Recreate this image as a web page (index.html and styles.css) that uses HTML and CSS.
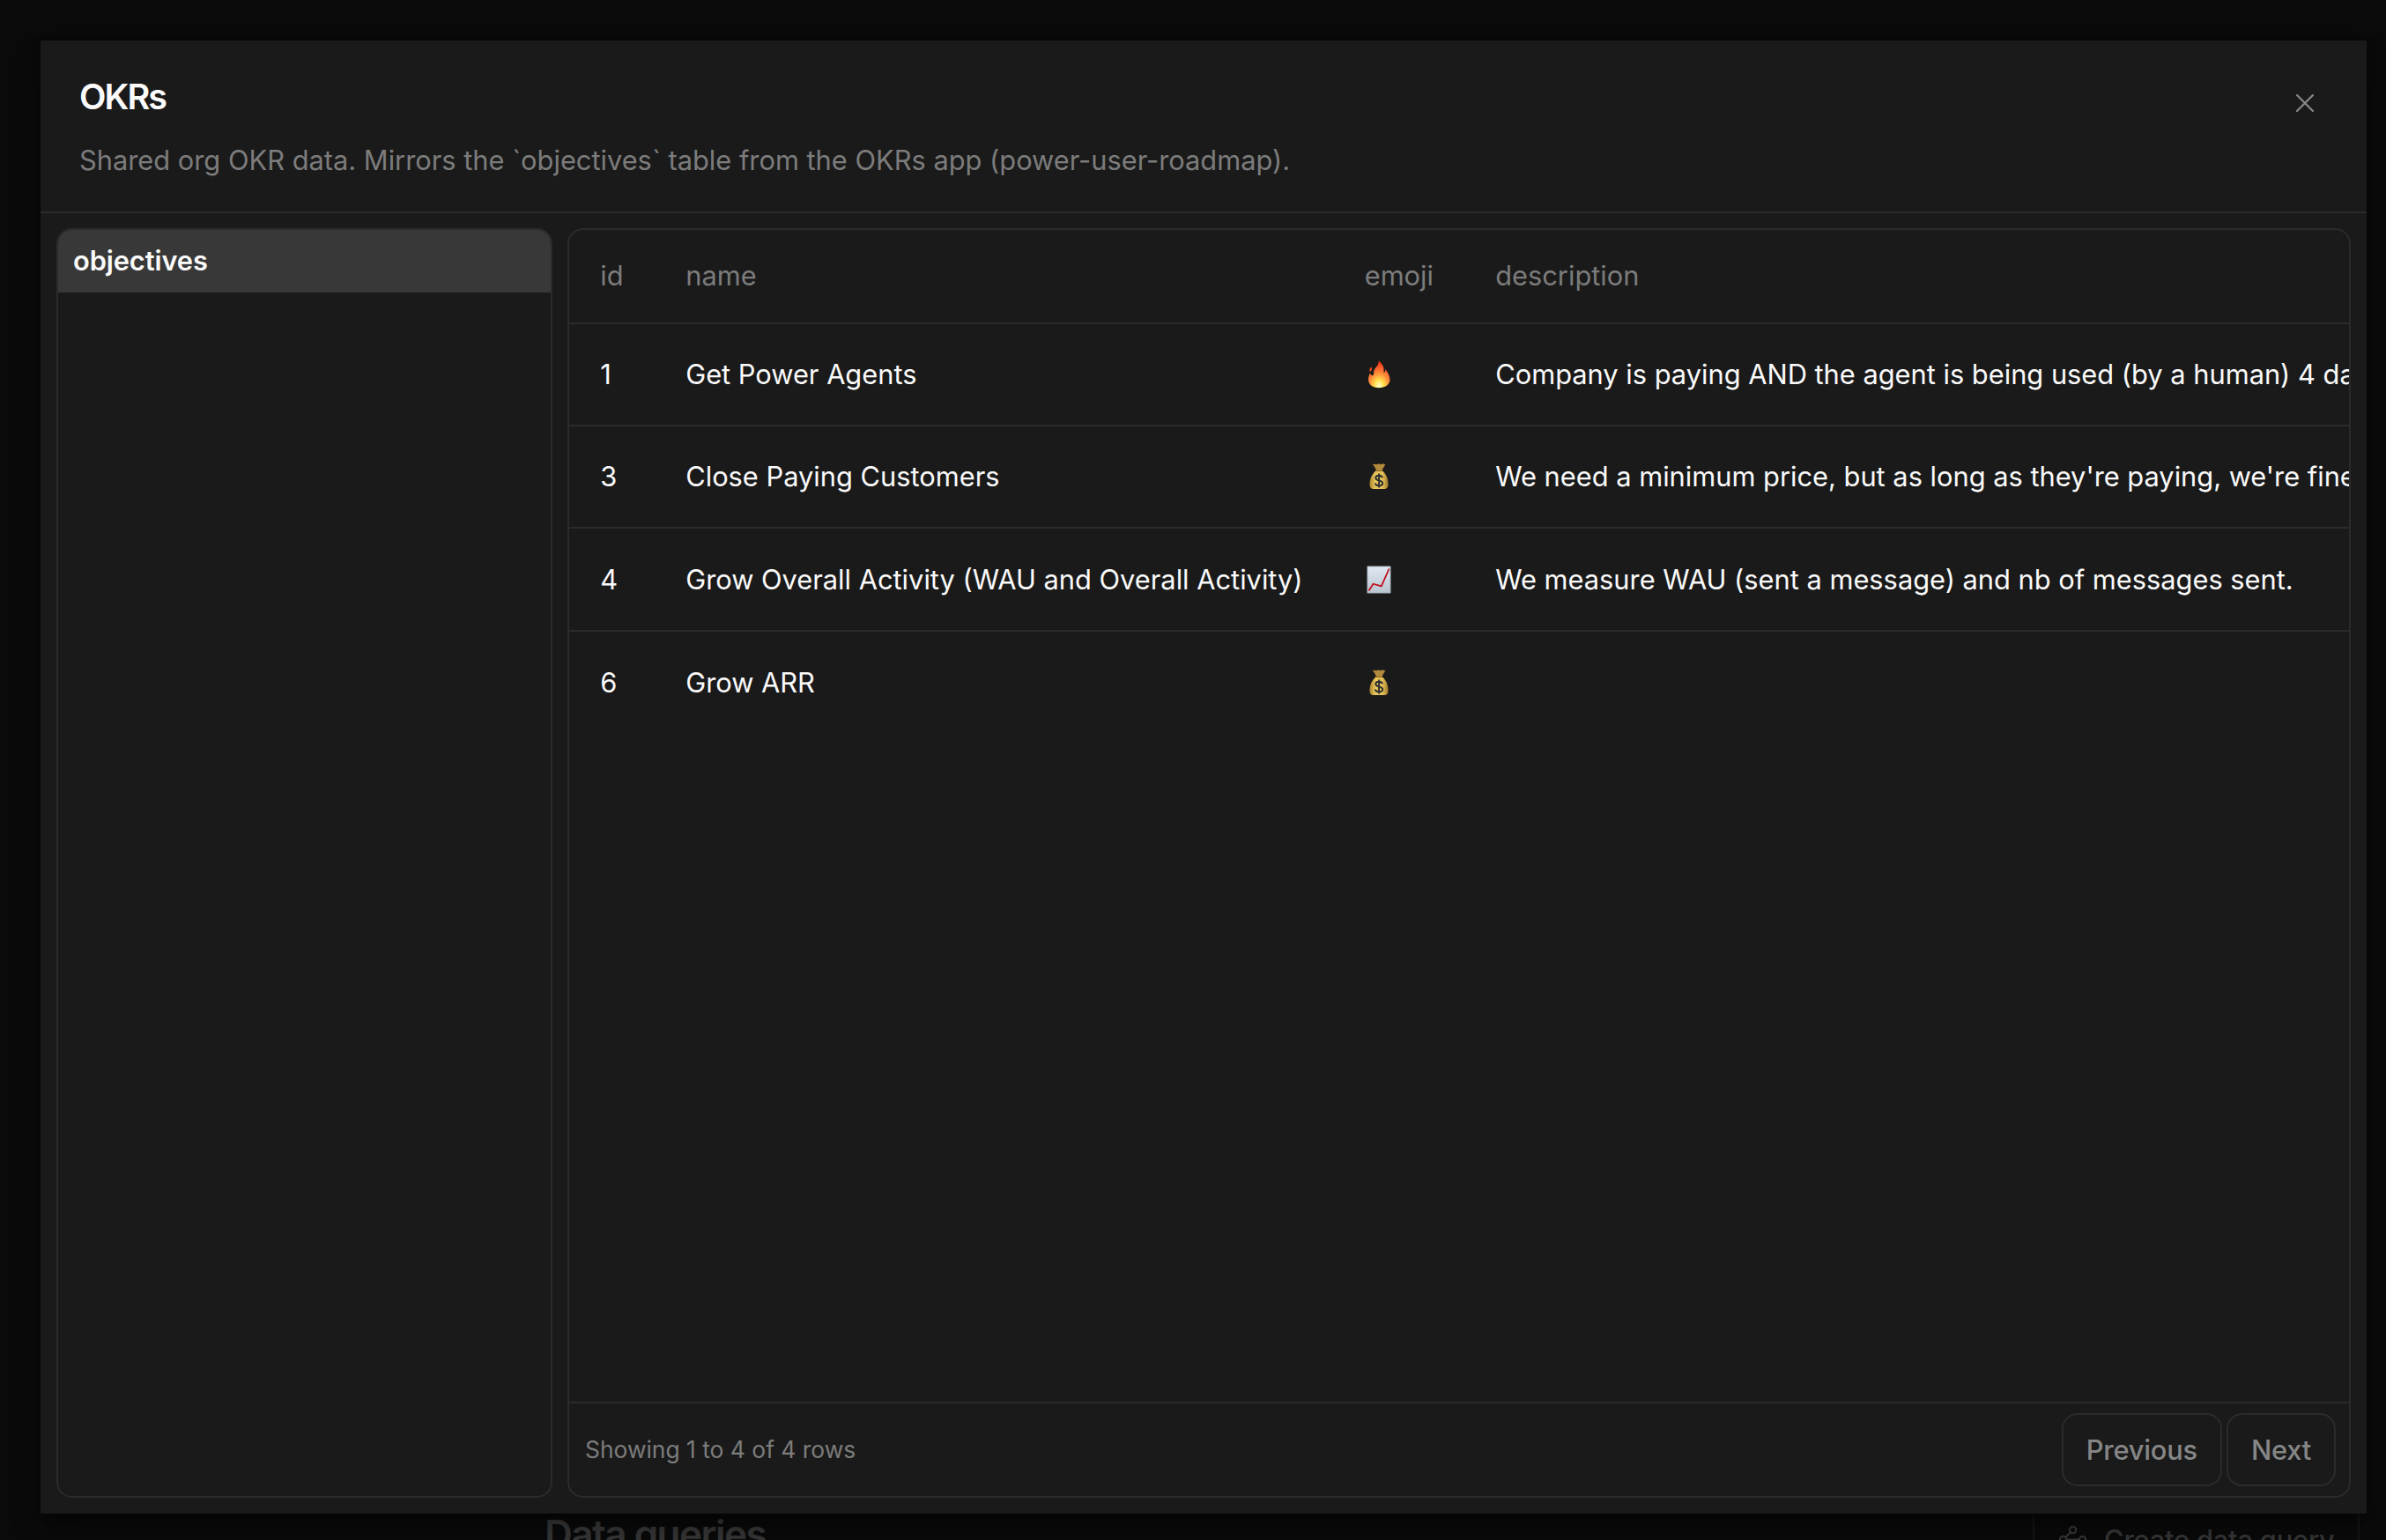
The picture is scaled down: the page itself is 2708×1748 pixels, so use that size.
FILE: index.html
```html
<!DOCTYPE html>
<html lang="en">
<head>
    <meta charset="UTF-8">
    <meta name="viewport" content="width=device-width, initial-scale=1.0">
    <title>OKRs</title>
    <link rel="stylesheet" href="styles.css">
</head>
<body>

    <!-- emoji shapes, reused in the table -->
    <svg class="defs" width="0" height="0">
        <defs>
            <radialGradient id="fireFill" cx="0.5" cy="0.92" r="0.85">
                <stop offset="0" stop-color="#fffbd0"/>
                <stop offset="0.25" stop-color="#ffe04a"/>
                <stop offset="0.55" stop-color="#ff8a3a"/>
                <stop offset="1" stop-color="#f0371a"/>
            </radialGradient>
            <linearGradient id="bagFill" x1="0" x2="1" y1="0" y2="0">
                <stop offset="0" stop-color="#a9842f"/>
                <stop offset="0.3" stop-color="#e8c65a"/>
                <stop offset="0.7" stop-color="#e3bf55"/>
                <stop offset="1" stop-color="#a07a2b"/>
            </linearGradient>
            <linearGradient id="chartFill" x1="0" x2="0" y1="0" y2="1">
                <stop offset="0" stop-color="#dfe9f2"/>
                <stop offset="1" stop-color="#b9c4cf"/>
            </linearGradient>
            <symbol id="fire" viewBox="0 0 32 32">
                <path fill="url(#fireFill)" d="M15.500 0.500C18 2 21.300 5.500 21.600 10C21.700 12 21.300 13.500 21.800 14C23 13.700 23.500 12 23.300 10C26 13.500 28.500 17.500 28.500 22C28.500 27.500 23 31.300 16 31.300C9 31.300 4 27.500 4 21.500C4 18.500 5 16.500 6 14.500C6.500 16 7.400 17.200 8.600 17.300C10 17 10.300 15.500 10.200 13C10 9 16.500 6.500 15.500 0.500Z"/>
                <path fill="#ee4a20" d="M7.600 7.500C8.500 9 8.200 11.500 6 13C4.500 11.500 5.500 9 7.600 7.500Z"/>
            </symbol>
            <symbol id="bag" viewBox="0 0 32 32">
                <path fill="#b18a3c" d="M9 2.300C11 1.100 13 2.900 14.500 1.700C16 0.900 17.500 2.500 19 1.700C21 0.900 22.500 2.100 23.500 2.300C22 4.500 20 7 19.500 10H13C12.500 7 11 4.500 9 2.300Z"/>
                <path fill="url(#bagFill)" d="M13 9H19.500C23.500 12 26.500 17.500 26.500 24.500C26.500 28.500 25 30 22 30H10C7 30 5.500 28.500 5.500 24.500C5.500 17.500 9 12 13 9Z"/>
                <path fill="none" stroke="#8a6526" d="M12.500 9.500H20"/>
                <path fill="none" stroke="#2b2d33" stroke-width="1.900" d="M20 17.200C19.500 15.300 18 14.700 16 14.700C13.800 14.700 12.300 15.700 12.300 17.500C12.300 21.500 20.200 19.300 20.200 23.500C20.200 25.300 18.500 26.300 16.200 26.300C13.800 26.300 12.200 25.400 11.800 23.500M16.100 12.500V28.500"/>
            </symbol>
            <symbol id="chart" viewBox="0 0 32 32">
                <path fill="url(#chartFill)" stroke="#9aa5b0" stroke-width="0.800" d="M2.900 0.900H29.100V31.100H2.900Z"/>
                <path fill="none" stroke="#c0101c" stroke-width="1.800" d="M4.500 28.500L9.500 20.700L18.800 23.300L27.600 3.500"/>
            </symbol>
        </defs>
    </svg>

    <!-- page behind the dialog -->
    <div class="page">
        <h2 class="page-title">Data queries</h2>
        <button class="create-btn">
            <svg class="create-icon" viewBox="0 0 24 24">
                <circle cx="12" cy="4.5" r="2.5"/>
                <path d="M10.200 6.300L6.300 10.200"/>
                <circle cx="4.5" cy="12" r="2.5"/>
                <path d="M7 12H17"/>
                <circle cx="19.5" cy="12" r="2.5"/>
                <path d="M13.800 17.700L17.700 13.800"/>
                <circle cx="12" cy="19.5" r="2.5"/>
            </svg>
            Create data query
        </button>
    </div>

    <div class="dialog">
        <div class="dialog-header">
            <div>
                <h1>OKRs</h1>
                <p>Shared org OKR data. Mirrors the `objectives` table from the OKRs app (power-user-roadmap).</p>
            </div>
            <svg class="close" viewBox="0 0 20 20"><path d="M1 1L19 19M19 1L1 19"/></svg>
        </div>

        <div class="dialog-body">
            <div class="sidebar">
                <div class="sidebar-item">objectives</div>
            </div>

            <div class="panel">
                <div class="table-wrap">
                    <table>
                        <colgroup>
                            <col class="col-id">
                            <col class="col-name">
                            <col class="col-emoji">
                            <col>
                        </colgroup>
                        <thead>
                            <tr><th>id</th><th>name</th><th>emoji</th><th>description</th></tr>
                        </thead>
                        <tbody>
                            <tr>
                                <td>1</td>
                                <td>Get Power Agents</td>
                                <td><svg class="emoji"><use href="#fire"/></svg></td>
                                <td>Company is paying AND the agent is being used (by a human) 4 da</td>
                            </tr>
                            <tr>
                                <td>3</td>
                                <td>Close Paying Customers</td>
                                <td><svg class="emoji"><use href="#bag"/></svg></td>
                                <td>We need a minimum price, but as long as they're paying, we're fine</td>
                            </tr>
                            <tr>
                                <td>4</td>
                                <td>Grow Overall Activity (WAU and Overall Activity)</td>
                                <td><svg class="emoji"><use href="#chart"/></svg></td>
                                <td>We measure WAU (sent a message) and nb of messages sent.</td>
                            </tr>
                            <tr>
                                <td>6</td>
                                <td>Grow ARR</td>
                                <td><svg class="emoji"><use href="#bag"/></svg></td>
                                <td></td>
                            </tr>
                        </tbody>
                    </table>
                </div>

                <div class="panel-footer">
                    <span class="count">Showing 1 to 4 of 4 rows</span>
                    <button class="pager-btn">Previous</button>
                    <button class="pager-btn">Next</button>
                </div>
            </div>
        </div>
    </div>

</body>
</html>
```
FILE: styles.css
```css
* {
    box-sizing: border-box;
}
body {
    margin: 0;
    height: 1748px;
    overflow: hidden;
    position: relative;
    background: #0a0a0a;
    color: #fafafa;
    font-family: Inter, sans-serif;
    font-size: 30.8px;
    line-height: 48px;
}
h1, h2, p {
    margin: 0;
}
button {
    font: inherit;
    background: none;
}
.defs {
    position: absolute;
}

/* page behind */
.page {
    height: 1748px;
    padding: 1704px 30px 0 618px;
    display: flex;
    justify-content: space-between;
    align-items: flex-start;
    overflow: hidden;
}
.page-title {
    color: #383838;
    font-size: 44px;
    font-weight: 600;
    line-height: 74px;
    letter-spacing: -1.5px;
}
.create-btn {
    display: flex;
    align-items: center;
    gap: 17.6px;
    height: 88px;
    padding: 0 26.4px;
    border: 2px solid #161616;
    border-radius: 17.6px;
    color: #383838;
    font-weight: 500;
    letter-spacing: -0.2px;
    white-space: nowrap;
}
.create-icon {
    width: 35.2px;
    height: 35.2px;
    flex: none;
    fill: none;
    stroke: #383838;
    stroke-width: 1.5;
}

/* dialog */
.dialog {
    position: absolute;
    left: 46px;
    top: 46px;
    width: 2640px;
    height: 1672px;
    display: flex;
    flex-direction: column;
    background: #1a1a1a;
    box-shadow: 0 22px 33px -6px rgba(0, 0, 0, 0.4), 0 4px 9px -2px rgba(0, 0, 0, 0.4);
}
.dialog-header {
    height: 196px;
    padding: 40px 60px 0 44px;
    display: flex;
    justify-content: space-between;
    border-bottom: 2px solid #2b2b2b;
}
.dialog-header h1 {
    font-size: 39.6px;
    font-weight: 600;
    letter-spacing: -1.9px;
}
.dialog-header p {
    margin-top: 24px;
    color: #7c7c7c;
}
.close {
    width: 20px;
    height: 20px;
    margin-top: 21px;
    fill: none;
    stroke: #8a8a8a;
    stroke-width: 2.2;
    stroke-linecap: round;
}
.dialog-body {
    flex: 1;
    display: flex;
    gap: 17px;
    padding: 17px 18px 18px;
}
.sidebar, .panel {
    border: 2px solid #2b2b2b;
    border-radius: 17.6px;
    overflow: hidden;
}
.sidebar {
    width: 563px;
}
.sidebar-item {
    height: 71px;
    padding: 0 17px;
    background: #383838;
    font-weight: 600;
    line-height: 70px;
    letter-spacing: -0.1px;
}
.panel {
    flex: 1;
    min-width: 0;
    display: flex;
    flex-direction: column;
}
.table-wrap {
    flex: 1;
    overflow: hidden;
}
table {
    width: 2400px;
    table-layout: fixed;
    border-collapse: separate;
    border-spacing: 0;
}
.col-id {
    width: 97px;
}
.col-name {
    width: 770.5px;
}
.col-emoji {
    width: 148.5px;
}
th, td {
    padding: 0 0 0 35.2px;
    text-align: left;
    white-space: nowrap;
    border-bottom: 2px solid #2b2b2b;
}
th {
    height: 107px;
    padding-bottom: 2px;
    color: #7c7c7c;
    font-weight: 400;
}
td {
    height: 116px;
}
tbody tr:nth-child(3) td {
    height: 117px;
}
tbody tr:last-child td {
    border-bottom: none;
}
.emoji {
    display: block;
    width: 32px;
    height: 32px;
}
.panel-footer {
    height: 107px;
    padding: 0 15px 0 18px;
    display: flex;
    align-items: center;
    gap: 5px;
    border-top: 2px solid #2b2b2b;
}
.count {
    flex: 1;
    padding-bottom: 1px;
    color: #7c7c7c;
    font-size: 26.4px;
}
.pager-btn {
    height: 83px;
    padding: 0 26px;
    border: 2px solid #2b2b2b;
    border-radius: 17.6px;
    color: #868686;
    font-weight: 500;
    letter-spacing: -0.2px;
}
```
